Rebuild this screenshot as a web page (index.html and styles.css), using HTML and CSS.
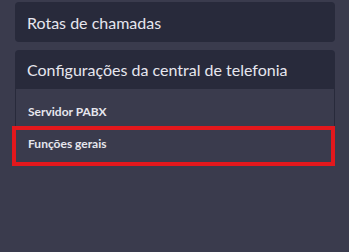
FILE: index.html
```html
<!DOCTYPE html>
<html lang="pt">
<head>
<meta charset="utf-8">
<link rel="stylesheet" href="styles.css">
</head>
<body>
<div class="panel">
  <div class="card">
    <div class="card-header">Rotas de chamadas</div>
  </div>
  <div class="card">
    <div class="card-header">Configurações da central de telefonia</div>
    <div class="card-body">
      <div class="item">Servidor PABX</div>
      <div class="item item-highlight">Funções gerais<span class="highlight-box"></span></div>
    </div>
  </div>
</div>
</body>
</html>
```
FILE: styles.css
```css
html, body {
  margin: 0;
  padding: 0;
  background: #3a3b4d;
  font-family: Lato, "Open Sans", sans-serif;
  color: #e6e6ee;
}
.panel {
  width: 320px;
  padding: 2px 0 0 15px;
  display: flex;
  flex-direction: column;
  gap: 8px;
}
.card {
  border-radius: 4px;
  overflow: visible;
}
.card-header {
  background: #282a3b;
  height: 40px;
  padding: 0 12px;
  display: flex;
  align-items: center;
  font-size: 16px;
  border-radius: 4px;
}
.card .card-header:not(:last-child) {
  border-radius: 4px 4px 0 0;
  height: 39px;
}
.card-body {
  border-left: 1px solid #282a3b;
  border-right: 1px solid #282a3b;
  padding: 6px 0 7px;
}
.item {
  position: relative;
  height: 32px;
  display: flex;
  align-items: center;
  padding-left: 12px;
  font-size: 12px;
  font-weight: 700;
}
.highlight-box {
  position: absolute;
  left: -4px;
  right: -1px;
  top: -1px;
  bottom: -7px;
  border: 4px solid #e3181d;
}
```
